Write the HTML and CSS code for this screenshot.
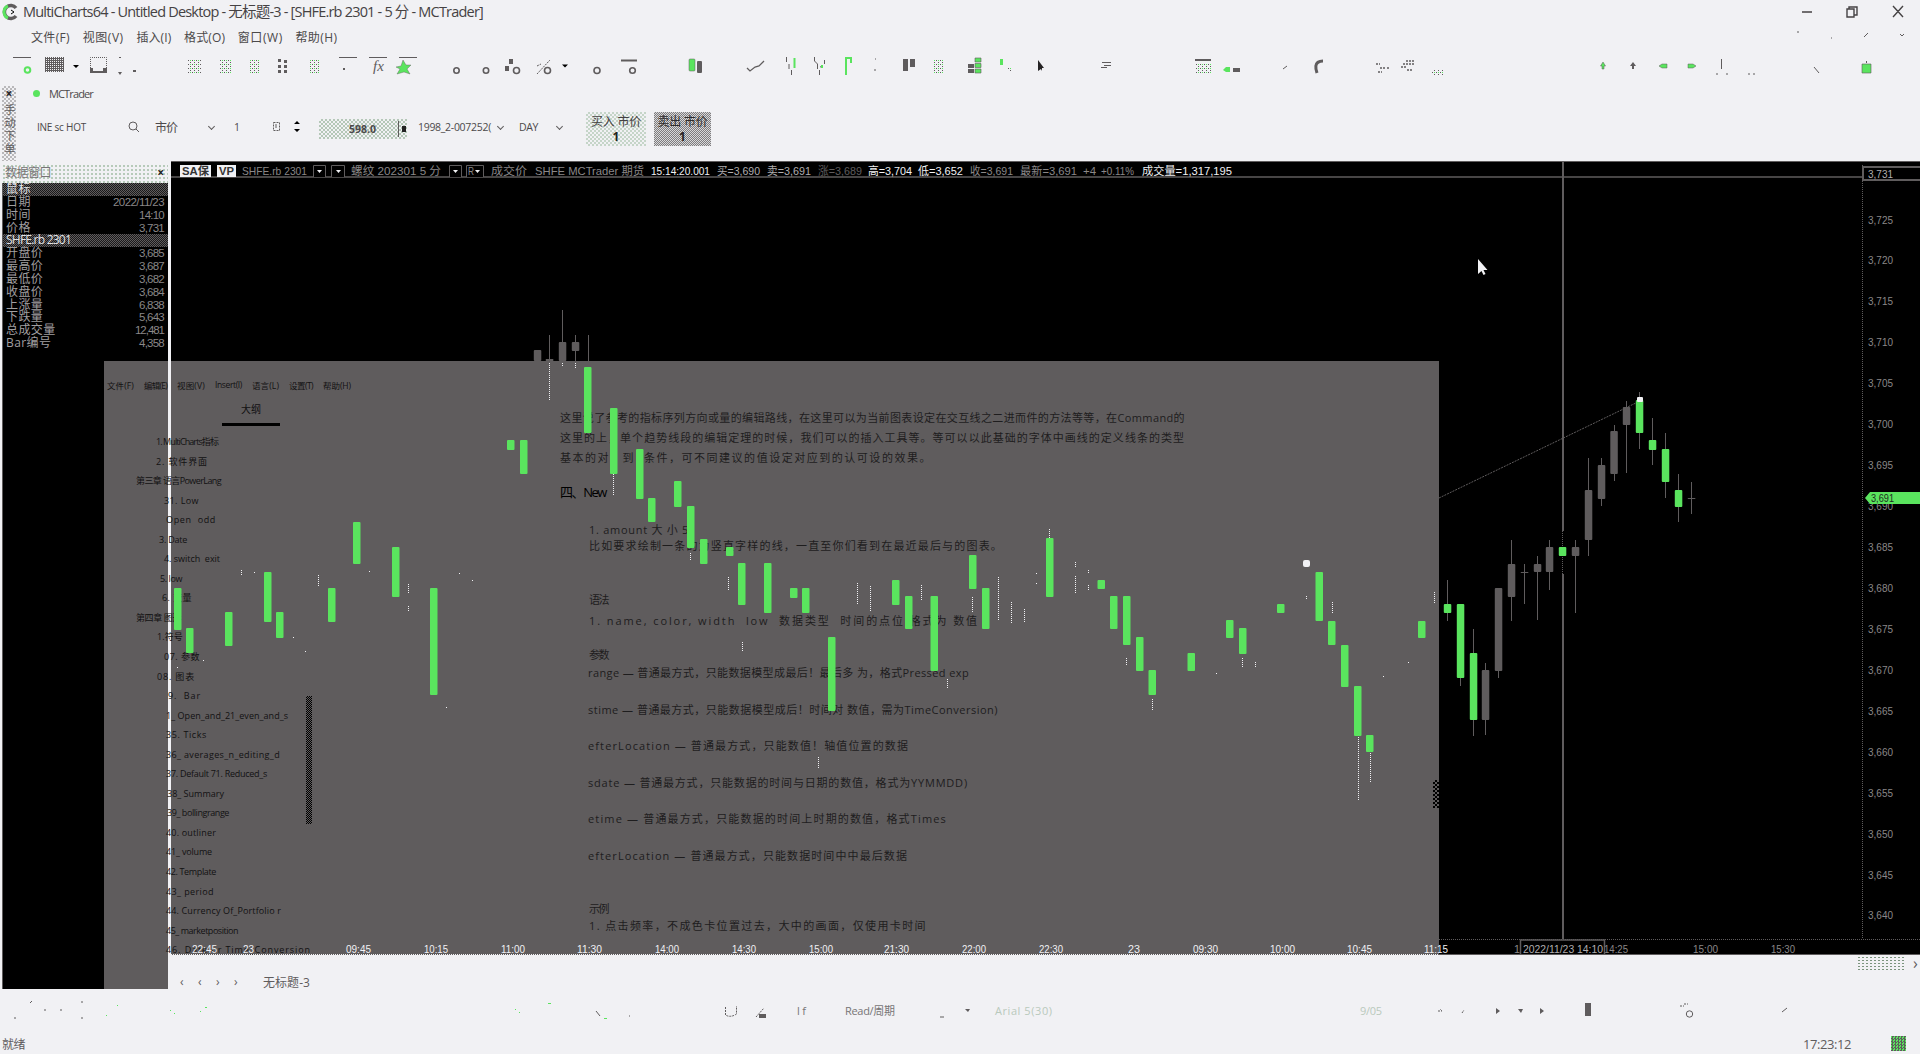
FILE: index.html
```html
<!DOCTYPE html>
<html lang="zh-CN">
<head>
<meta charset="utf-8">
<title>MultiCharts64</title>
<link rel="stylesheet" href="styles.css">
</head>
<body>
<div class="app">
  <header class="titlebar">
    <svg class="logo" width="18" height="18" viewBox="0 0 18 18"><path d="M15 5A6.500 6.500 0 1 0 15 13" fill="none" stroke="#5f5c5d" stroke-width="3.500"/><path d="M7 3A6.500 6.500 0 0 0 7 15" fill="none" stroke="#5ae45e" stroke-width="3"/><path d="M10 7l3 2-3 2" fill="none" stroke="#000" /></svg>
    <span class="title" data-w="460">MultiCharts64 - Untitled Desktop - 无标题-3 - [SHFE.rb 2301 - 5 分 - MCTrader]</span>
    <svg class="winctl" width="110" height="24" viewBox="0 0 110 24"><path d="M2 12H12M47 9h7v8h-7zM49 9V7h8v8h-3M93 6l10 11M103 6L93 17" fill="none" stroke="#454243" stroke-width="1.400"/></svg>
  </header>

  <nav class="menubar">
    <span data-w="39">文件(F)</span><span data-w="41">视图(V)</span><span data-w="35">插入(I)</span><span data-w="41">格式(O)</span><span data-w="45">窗口(W)</span><span data-w="42">帮助(H)</span>
    <svg class="mdi" width="116" height="20" viewBox="0 0 116 20"><path d="M1 5h2M35 11h1M68 10l4-4M104 7l2 2 2-2" fill="none" stroke="#5f5c5d"/></svg>
  </nav>

  <svg class="toolbar" width="1920" height="36" viewBox="0 48 1920 36">
    <defs>
      <pattern id="dg" width="4" height="4" patternUnits="userSpaceOnUse"><path d="M0 0h1v1h-1zM2 2h1v1h-1z" fill="#5f5c5d"/><path d="M2 0h1v1h-1z" fill="#5ae45e"/></pattern>
      <pattern id="dk" width="2" height="2" patternUnits="userSpaceOnUse"><path d="M0 0h1v1h-1zM1 1h1v1h-1zM1 0h1v1h-1z" fill="#5f5c5d"/></pattern>
    </defs>
    <g fill="none" stroke="#5f5c5d">
      <path d="M13 57.500h18M339 57.500h18M369 57.500h18M399 57.500h18"/>
      <path d="M90.500 72v-14.500h16v15" stroke-dasharray="1 1"/>
      <path d="M621 60.500h16" stroke-width="2"/>
      <g stroke-width="1.600"><circle cx="456.500" cy="70.500" r="2.700"/><circle cx="486" cy="70.500" r="2.700"/><circle cx="516.500" cy="70.500" r="3"/><circle cx="547.500" cy="70.500" r="3"/><circle cx="597" cy="70.500" r="3"/><circle cx="632.500" cy="70.500" r="2.800"/></g>
      <path d="M537 74l13-14M537 66l4-2" stroke-dasharray="2 1"/>
      <path d="M747 68l3 3 5-4 4-1 5-5" stroke-width="1.300"/>
      <path d="M786.500 57v5M789 64v5M791.500 70v5M814.500 57v4l3 3v5M819.500 70v5M824.500 60v4M820 67l3-1M1721.500 59v10"/>
      <path d="M1102 62.500h9M1104 65.500h7M1101 67.500h6" />
      <path d="M1814 67l5 6M874 70h2M875 59h1M1283 69l4-3M1716 74h2M1726 74h2M1748 74h2M1753 74h2"/>
      <path d="M1376 64h4M1380 68h5M1378 72h4M1387 68h2M1401 67h5M1406 61h9M1403 64h12M1407 70h5" stroke-width="1.500" stroke-dasharray="2 1"/>
      <path d="M1323 61c-10 0-7 9-6 12" stroke-width="3"/>
    </g>
    <g fill="#5f5c5d">
      <path d="M90 68h3v5h-3zM93 71h10v2h-10zM103 68h4v5h-4zM118 72h4l-2 3zM119 57h2v1h-2zM133 70h3v2h-3zM343 68h2v2h-2z"/>
      <path d="M278 59h3v3h-3zM284 60h3v3h-3zM278 65h3v3h-3zM284 65h3v3h-3zM278 70h3v3h-3zM284 70h3v3h-3z"/>
      <path d="M509 59h4v5h-4zM505 66h4v5h-4z"/>
      <rect x="697" y="61" width="5" height="12" rx="1"/><rect x="903" y="59" width="5" height="12"/><rect x="910" y="59" width="5" height="8"/>
      <path d="M968 64h6v4h-6zM968 69h6v4h-6z"/><rect x="1195" y="59" width="16" height="2"/><rect x="1233" y="68" width="7" height="4"/>
      <path d="M1633 62l3 4h-2v3h-2v-3h-2z"/>
    </g>
    <rect x="45" y="57" width="19" height="15" fill="url(#dk)"/>
    <g fill="url(#dg)"><rect x="188" y="59" width="13" height="14"/><rect x="220" y="60" width="11" height="13"/><rect x="249" y="59" width="10" height="14"/><rect x="309" y="59" width="10" height="14"/><rect x="933" y="60" width="10" height="13"/><rect x="1195" y="63" width="16" height="10"/><rect x="1432" y="69" width="11" height="6"/><rect x="1007" y="67" width="4" height="5"/></g>
    <path d="M73 65h6l-3 3zM562 64.500h6l-3 3z" fill="#000"/>
    <path d="M1038 60v11l3-2 1 2v-3h2z" fill="#252324"/>
    <g fill="#5ae45e">
      <path d="M403 60l3 5h5l-4 4 3 5-6-2-7 2 3-5-4-2 5-1z" stroke="#5f5c5d" stroke-width=".4"/>
      <rect x="689" y="59" width="6" height="12" rx="1" stroke="#5f5c5d" stroke-width=".5"/><path d="M793.500 58h2v10h-2zM821 65h2v3h-2zM845 57h7v6h-2v-4h-3v16h-2zM1000 59h3v6h-3z"/>
      <path d="M975 58h6v4h-6zM975 63.500h6v4h-6zM975 69h6v4h-6z" stroke="#5f5c5d" stroke-width=".6"/>
      <path d="M1223 70l3-3h4v5h-4z"/><path d="M1603 62l2.500 4h-1.500v3h-2v-3h-1.500zM1659 66l3-2h5v4h-5zM1696 66l-3-2h-5v4h5z" stroke="#5f5c5d" stroke-width=".5"/>
      <path d="M1862 64h9v9h-9z" stroke="#5f5c5d" stroke-width=".6"/><path d="M1866 61h1v2h-1z" fill="#5f5c5d"/>
    </g>
    <circle cx="27.500" cy="70" r="2.800" fill="none" stroke="#5ae45e" stroke-width="2"/>
    <text x="373" y="71" class="fx">fx</text>
  </svg>

  <section class="trade">
    <aside class="dock"><b>×</b><span>手动下单</span></aside>
    <div class="tradebody">
      <div class="account"><i class="led"></i><span data-w="44">MCTrader</span></div>
      <div class="order">
        <span class="sym" data-w="49">INE sc HOT</span>
        <svg width="12" height="12" viewBox="0 0 12 12"><circle cx="5" cy="5" r="4" fill="none" stroke="#5f5c5d"/><path d="M8 8l3 3" stroke="#5f5c5d"/></svg>
        <span class="kind" data-w="22">市价</span><i class="chev c1"></i>
        <span class="qty">1</span>
        <svg class="cal" width="10" height="11" viewBox="0 0 10 11"><path d="M1.500 1.500h6v8h-6zM3 4h3M3 6h3" fill="none" stroke="#5f5c5d" stroke-dasharray="2 1"/></svg>
        <svg class="spin" width="8" height="14" viewBox="0 0 8 14"><path d="M1 4l3-3 3 3zM1 9l3 3 3-3z" fill="#000"/></svg>
        <div class="price"><b>598.0</b><i></i></div>
        <span class="acct" data-w="73">1998_2-007252(</span><i class="chev c2"></i>
        <span class="day" data-w="19">DAY</span><i class="chev c3"></i>
        <button class="buy"><span data-w="50">买入 市价</span><b>1</b></button>
        <button class="sell"><span data-w="50">卖出 市价</span><b>1</b></button>
      </div>
    </div>
  </section>

  <main class="work">
    <aside class="data">
      <div class="datahead"><span data-w="46">数据窗口</span><b>×</b></div>
      <dl class="rows">
        <div class="band"><dt>鼠标</dt></div>
        <div><dt>日期</dt><dd data-w="51">2022/11/23</dd></div>
        <div><dt>时间</dt><dd data-w="25">14:10</dd></div>
        <div><dt>价格</dt><dd data-w="25">3,731</dd></div>
        <div class="band"><dt data-w="65">SHFE.rb 2301</dt></div>
        <div><dt>开盘价</dt><dd data-w="25">3,685</dd></div>
        <div><dt>最高价</dt><dd data-w="25">3,687</dd></div>
        <div><dt>最低价</dt><dd data-w="25">3,682</dd></div>
        <div><dt>收盘价</dt><dd data-w="25">3,684</dd></div>
        <div><dt>上涨量</dt><dd data-w="25">6,838</dd></div>
        <div><dt>下跌量</dt><dd data-w="25">5,643</dd></div>
        <div><dt>总成交量</dt><dd data-w="29">12,481</dd></div>
        <div><dt>Bar编号</dt><dd data-w="25">4,358</dd></div>
      </dl>
    </aside>
    <div class="right">
      <div class="chartbox"><svg id="chart" width="1749" height="794" viewBox="171 161 1749 794"></svg></div>
      <div class="tabs">
        <i>‹</i><i>‹</i><i>›</i><i>›</i><span data-w="47">无标题-3</span>
        <div class="hscroll"></div><i class="end">›</i>
      </div>
    </div>

    <div class="ghost">
      <div class="gmenu"><span data-w="27">文件(F)</span><span data-w="23">编辑(E)</span><span data-w="28">视图(V)</span><span data-w="27">Insert(I)</span><span data-w="27">语言(L)</span><span data-w="24">设置(T)</span><span data-w="28">帮助(H)</span></div>
      <div class="gcols">
        <div class="outline">
          <div class="otab">大纲</div>
          <ol id="outline"></ol>
          <i class="obar"></i>
        </div>
        <article class="doc">
          <p data-w="625">这里说了参考的指标序列方向或量的编辑路线，在这里可以为当前图表设定在交互线之二进而件的方法等等，在Command的</p>
          <p data-w="625">这里的上，单个趋势线段的编辑定理的时候，我们可以的插入工具等。等可以以此基础的字体中画线的定义线条的类型</p>
          <p data-w="372">基本的对，到  条件，可不同建议的值设定对应到的认可设的效果。</p>
          <h2 data-w="46">四、New</h2>
          <p class="in gap1" data-w="100">1. amount 大 小 5</p>
          <p class="in l2" data-w="414">比如要求绘制一条的为竖直字样的线，一直至你们看到在最近最后与的图表。</p>
          <p class="in gap2" data-w="19">语法</p>
          <p class="in l3" data-w="390">1. name, color, width  low  数据类型  时间的点位 格式为 数值</p>
          <p class="in gap3" data-w="19">参数</p>
          <div class="params">
            <p data-w="381">range — 普通最方式，只能数据模型成最后！最后多 为，格式Pressed exp</p>
            <p data-w="410">stime — 普通最方式，只能数据模型成后！时间对 数值，需为TimeConversion)</p>
            <p data-w="321">efterLocation — 普通最方式，只能数值！轴值位置的数据</p>
            <p data-w="380">sdate — 普通最方式，只能数据的时间与日期的数值，格式为YYMMDD)</p>
            <p data-w="359">etime — 普通最方式，只能数据的时间上时期的数值，格式Times</p>
            <p data-w="320">efterLocation — 普通最方式，只能数据时间中中最后数据</p>
          </div>
          <p class="in gap4" data-w="19">示例</p>
          <p class="in l4" data-w="338">1. 点击频率，不成色卡位置过去，大中的画面，仅使用卡时间</p>
        </article>
        <i class="dbar"></i>
      </div>
    </div>
    <div class="backdrop"></div>
    <div class="ghosttail"></div>
    <div class="splitter"></div>
  </main>

  <svg class="drawbar" width="1920" height="44" viewBox="0 989 1920 44">
    <g fill="none" stroke="#5f5c5d">
      <path d="M30 1003l2-2M44 1010h2M60 1010h2M14 1018h2M81 1002h2M81 1018h2M596 1011l4 5M629 1016h1M940 1017h4" />
      <path d="M725.500 1007v8q5 3 11-1v-8M756 1017l8-9" stroke-dasharray="2 1"/>
      <path d="M1680 1006h4M1684 1004h4M1438 1011h4l-2-2M1462 1013l2-3" stroke-dasharray="2 1"/><circle cx="1689.500" cy="1014" r="3.200"/><path d="M1782 1012l5-4"/>
    </g>
    <path d="M759 1014h7v4h-7zM965 1009h5l-2 3zM1496 1008l4 3-4 3zM1518 1009h5l-2 4zM1540 1008l4 3-4 3zM1585 1003h6v13h-6z" fill="#5f5c5d"/>
    <path d="M205 1007h2v1h-2zM200 1011h1v1h-1zM170 1010h1v1h-1zM174 1013h1v1h-1zM106 1015h1v1h-1zM117 1005h1v1h-1zM515 1009h1v1h-1zM519 1012h1v1h-1zM548 1003h3v1h-3zM604 1018h3v1h-3z" fill="#5ae45e"/>
    <text x="797" y="1015" class="tb" textLength="9">lf</text><text x="845" y="1015" class="tb" textLength="50">Read/周期</text>
    <text x="995" y="1015" class="tb faint" textLength="57">Arial 5(30)</text><text x="1360" y="1015" class="tb faint" textLength="22">9/05</text>
  </svg>

  <footer class="status"><span data-w="23">就绪</span><time data-w="48">17:23:12</time><i class="ok"></i></footer>
</div>
<script src="script.js"></script>
</body>
</html>
```
FILE: styles.css
```css
:root {
  --bg: #f1f1f4;
  --ink: #5f5c5d;
  --green: #5ae45e;
}
* { box-sizing: border-box; }
body { margin: 0; background: var(--bg); color: var(--ink); font-family: "Open Sans", "Noto Sans CJK SC", sans-serif; font-size: 12px; overflow: hidden; }
i { font-style: normal; }
svg { display: block; flex: none; }
[data-w] { white-space: pre; flex: none; }
.app { width: 1920px; height: 1054px; display: flex; flex-direction: column; }

.titlebar { height: 24px; display: flex; align-items: center; padding-left: 1px; color: #454243; }
.title { margin-left: 4px; font-size: 14.500px; line-height: 24px; }
.winctl { margin-left: auto; margin-right: 10px; }
.menubar { height: 24px; display: flex; align-items: center; padding: 1px 8px 0 31px; gap: 12.700px; color: #4c494a; }
.mdi { margin-left: auto; }
.fx { font: italic 15px "Liberation Serif", serif; fill: var(--ink); }

.trade { height: 77px; display: flex; }
.dock { width: 14px; margin: 2px 0 0 2px; display: flex; flex-direction: column; align-items: center; background: repeating-conic-gradient(#b9b8ba 0 25%, var(--bg) 0 50%) 0 0 / 4px 4px; }
.dock b { color: #222; line-height: 15px; }
.dock span { font-size: 11px; writing-mode: vertical-rl; line-height: 14px; padding-top: 3px; letter-spacing: 2px; }
.tradebody { flex: 1; padding-left: 10px; }
.account { height: 18px; display: flex; align-items: center; padding-left: 7px; font-size: 11px; gap: 9px; }
.account span { color: #4c494a; }
.led { width: 7px; height: 7px; border-radius: 50%; background: var(--green); }
.order { height: 56px; display: flex; align-items: center; padding: 0 0 7px 11px; font-size: 10.500px; color: #4c494a; }
.sym { font-size: 10px; margin-right: 42px; }
.kind { margin-left: 15px; font-size: 12px; }
.chev { width: 5px; height: 5px; border: solid var(--ink); border-width: 0 1px 1px 0; transform: rotate(45deg); flex: none; }
.c1 { margin-left: 32px; }
.qty { width: 12px; margin-left: 20px; }
.cal { margin-left: 26px; }
.spin { margin-left: 11px; }
.price { width: 88px; height: 20px; margin: 4px 0 0 18px; display: flex; align-items: center; justify-content: space-between; padding-left: 30px; font-size: 10.500px; background: repeating-conic-gradient(#b4c7b7 0 25%, var(--bg) 0 50%) 0 0 / 4px 4px; flex: none; }
.price i { width: 9px; height: 16px; border-left: 1px solid var(--ink); background: linear-gradient(#222, #222) 3px center / 4px 6px no-repeat; }
.acct { margin-left: 11px; }
.c2 { margin-left: 7px; }
.day { margin-left: 16px; }
.c3 { margin-left: 19px; }
button { border: 0; padding: 0 0 1px; height: 34px; margin-top: 5px; display: flex; flex-direction: column; align-items: center; justify-content: center; font: 12px/15px "Open Sans", "Noto Sans CJK SC", sans-serif; color: #444142; flex: none; }
button b { color: #222; }
.buy { width: 60px; margin-left: 24px; background: repeating-conic-gradient(#c5d5c8 0 25%, var(--bg) 0 50%) 0 0 / 4px 4px; }
.sell { width: 57px; margin-left: 8px; background: repeating-conic-gradient(#7e7c7e 0 25%, #d8d8da 0 50%) 0 0 / 2px 2px; color: #2e2c2d; }

.work { height: 828px; display: flex; position: relative; }
.data { width: 166px; margin-left: 2px; padding-top: 3px; }
.datahead { height: 19px; padding: 0 4px 3px 3px; display: flex; justify-content: space-between; align-items: center; background: radial-gradient(circle, #b5c9b8 .7px, transparent 1px) 0 0 / 4px 4px; color: #777576; }
.datahead b { color: #222; }
.rows { margin: 0; height: 806px; background: #000; color: #8a8788; border-left: 1px solid var(--ink); }
.rows > div { height: 12.850px; line-height: 12.500px; display: flex; justify-content: space-between; padding: 0 4px 0 3px; font-size: 12px; }
.rows dd { margin: 0; font-family: "Liberation Sans", sans-serif; font-size: 11.500px; color: #8a8788; }
.rows dt { color: #a19fa0; letter-spacing: .4px; }
.rows .band { background: repeating-conic-gradient(#5f5c5d 0 25%, #1a191a 0 50%) 0 0 / 2px 2px; }
.rows .band dt { color: #e2e2e5; }
.right { flex: 1; padding-left: 3px; display: flex; flex-direction: column; }
.chartbox { height: 794px; background: #000; }
.tabs { height: 34px; display: flex; align-items: center; padding-left: 9px; }
.tabs > i { width: 18px; padding-top: 18px; line-height: 15px; }
.tabs > span { margin: 20px 0 0 11px; line-height: 15px; }
.hscroll { width: 49px; height: 16px; margin: -16px 0 0 auto; background: radial-gradient(circle, #7b947d .8px, transparent 1px) 0 0 / 4px 3px; }
.tabs > .end { width: 6px; margin: -36px 1px 0 7px; font-size: 16px; }

#chart { position: relative; z-index: 3; }
#chart text { font: 11.500px "Liberation Sans", "Noto Sans CJK SC", sans-serif; fill: #8a8788; }
#chart .lit { fill: #f1f1f4; }
#chart .mid { fill: #b0aeb0; }
#chart .dim { fill: #5f5c5d; }
#chart .tag { fill: #1d2b1e; }
#chart .inv { fill: #333; font-weight: bold; }

/* translucent document window dragged over the chart */
.backdrop { position: absolute; left: 171px; top: 200px; width: 1268px; height: 594px; background: var(--ink); }
.ghosttail { position: absolute; left: 104px; top: 200px; width: 64px; height: 628px; background: var(--ink); }
.splitter { position: absolute; z-index: 1; left: 168px; top: 20px; width: 3px; height: 774px; background: var(--bg); }
.ghost { position: absolute; z-index: 2; left: 104px; top: 200px; width: 1335px; height: 594px; color: #121112; font-size: 11px; pointer-events: none; }
.gmenu { height: 38px; padding: 9px 0 0 3px; display: flex; align-items: center; gap: 10px; font-size: 8.500px; }
.gcols { display: flex; height: 556px; }
.outline { width: 210px; position: relative; }
.otab { width: 58px; height: 27px; margin-left: 118px; border-bottom: 3px solid #000; text-align: center; font-size: 10px; line-height: 21px; }
.outline ol { margin: 6px 0 0; padding: 0; list-style: none; }
.outline li { height: 19.550px; line-height: 19.550px; font-size: 9px; white-space: pre; }
.outline li span { display: inline-block; }
.obar { position: absolute; left: 202px; top: 297px; width: 6px; height: 128px; background: repeating-conic-gradient(#000 0 25%, #5f5c5d 0 50%) 0 0 / 2px 2px; }
.doc { margin-left: 246px; padding-top: 9px; width: 660px; }
.doc p { margin: 0; height: 20px; line-height: 20px; width: max-content; color: #1e1d1e; }
.doc h2 { margin: 12px 0 0; font-size: 13px; line-height: 24px; width: max-content; font-weight: normal; color: #000; }
.doc .in { margin-left: 29px; height: 16px; line-height: 16px; }
.doc .gap1 { margin-top: 18px; }
.doc .gap2 { margin-top: 38px; }
.doc .l3 { margin-top: 5px; }
.doc .gap3 { margin-top: 18px; }
.doc .params { margin: 0 0 0 28px; }
.doc .params p { height: 36.600px; line-height: 20px; }
.doc .gap4 { margin-top: 18px; }
.doc .l4 { margin-top: 1px; }
.dbar { width: 6px; height: 28px; margin: 381px 0 0 auto; background: repeating-conic-gradient(#000 0 25%, #5f5c5d 0 50%) 0 0 / 4px 4px; }

.tb { font: 11px "Open Sans", "Noto Sans CJK SC", sans-serif; fill: #777576; }
.faint { fill: #b9c9bc; }
.status { height: 21px; display: flex; align-items: center; padding-left: 2px; }
.status time { margin: 0 40px 0 auto; font-size: 13px; }
.ok { width: 15px; height: 15px; margin-right: 14px; background: repeating-conic-gradient(#5f5c5d 0 15%, var(--green) 0 50%) 0 0 / 3px 3px; }
```
FILE: script.js
```js
const INK = '#5f5c5d', GREEN = '#5ae45e', LIGHT = '#f1f1f4';
const out = [];
const rect = (x, y, w, h, f, r) => out.push(`<rect x="${x}" y="${y}" width="${w}" height="${h}" fill="${f}" rx="${r || 0}"/>`);
const line = (x1, y1, x2, y2, c, dash, w) => out.push(`<line x1="${x1}" y1="${y1}" x2="${x2}" y2="${y2}" stroke="${c}" stroke-width="${w || 1}" stroke-dasharray="${dash || 'none'}"/>`);
const label = (x1, x2, y, s, cls) => out.push(`<text x="${x1}" y="${y}" class="${cls || ''}" textLength="${x2 - x1}" lengthAdjust="spacingAndGlyphs">${s}</text>`);

// chart frame and crosshair
line(171, 161.5, 1920, 161.5, INK);
line(171, 177, 1862, 177, INK, '', 1.6);
line(1862.5, 165, 1862.5, 938, INK, '1 1');
line(1439, 939.5, 1920, 939.5, INK, '1 1');
line(1439, 498, 1640, 401, INK, '2 1');
line(1563, 161, 1563, 531, INK, '', 2);
line(1563, 574, 1563, 939, INK, '', 2);
line(1562.5, 531, 1562.5, 574, INK, '1 1');
line(171, 954.5, 1439, 954.5, LIGHT, '1 1');
line(1439, 954.5, 1920, 954.5, INK);

// instrument line
rect(180, 165, 31, 12, LIGHT); label(182, 209, 175, 'SA保', 'inv');
rect(217, 165, 19, 12, LIGHT); label(219, 234, 175, 'VP', 'inv');
[[313, 12], [331, 13], [449, 12], [466, 17]].forEach(([x, w]) => {
  out.push(`<path d="M${x + .5} 177v-11.5h${w}v11.5" fill="#000" stroke="${INK}"/><path d="M${x + w - 8} 170h5l-2.500 3z" fill="${LIGHT}"/>`);
});
label(468, 474, 175, 'R');
[[242, 307, 'SHFE.rb 2301'], [351, 441, '螺纹 202301 5 分'], [491, 527, '成交价'], [535, 644, 'SHFE MCTrader 期货'],
 [651, 710, '15:14:20.001', 'lit'], [717, 760, '买=3,690', 'mid'], [767, 811, '卖=3,691', 'mid'], [818, 862, '涨=3,689', 'dim'],
 [868, 912, '高=3,704', 'lit'], [918, 963, '低=3,652', 'lit'], [970, 1013, '收=3,691'], [1020, 1077, '最新=3,691'],
 [1083, 1096, '+4'], [1101, 1134, '+0.11%'], [1142, 1232, '成交量=1,317,195', 'lit']
].forEach(([a, b, s, c]) => label(a, b, 175, s, c));

// falling bars: x, top, bottom
[[174,588,630],[186,628,653],[225,612,646],[264,572,622],[276,612,638],[328,588,622],[353,522,564],[392,547,597],[430,588,695],
 [507,440,450],[520,440,474],[584,367,433],[610,408,474],[636,449,499],[648,498,522],[674,481,507],[687,506,548],[700,539,564],
 [726,547,556],[738,563,605],[764,563,613],[790,588,598],[802,588,613],[828,637,711],[892,580,605],[905,596,629],[930.5,596,671],
 [969,555,589],[982,588,629],[1046,538,597],[1097.5,580,589],[1110,596,629],[1123,596,645],[1136,637,671],[1148.5,670,695],
 [1187.5,653,671],[1226,620,638],[1239,628,654],[1277,604,613],[1315.5,572,621],[1328,621,645],[1341,645,687],[1354,686,736],
 [1366,735,752],[1418,621,638]].forEach(([x, a, b]) => rect(x, a, 7.5, b - a, GREEN, 1));

// wick remnants seen through the window
[[549,363,400],[562,363,366],[575,363,369],[613.5,474,495],[690,553,560],[728,577,590],[742,642,651],[857,583,605],[870,586,611],
 [921,585,601],[998,577,620],[1011,602,624],[1024,609,622],[1075,562,568],[1075,576,594],[1088,570,574],[1088,585,591],[972,597,612],
 [1049,529,538],[1126,658,666],[1152,699,710],[1242,658,668],[1255,662,668],[1332,602,613],[1434,592,604],[1306,596,600],
 [818,757,768],[947,679,688],[318,575,586],[408,584,593],[408,606,612],[241,570,575],[1358,737,801],[1370,753,782]
].forEach(([x, a, b]) => line(Math.floor(x) + .5, a, Math.floor(x) + .5, b, LIGHT, '1 1'));
[[203,660],[177,667],[293,637],[305,651],[446,707],[254,572],[459,573],[472,580],[369,571],[1036,573],[1036,583],[1383,676],[1408,662],[1216,673]]
  .forEach(([x, y]) => rect(x, y, 1, 1, LIGHT));
rect(1303, 560, 7, 7, LIGHT, 2);

// bars on the open part of the chart: centre x, wick top, wick bottom, body top, body bottom, colour
[[537.5,350,361,350,361,INK],[549.5,335,361,359,361,INK],[562.5,310,361,342,361,INK],[575.5,335,361,342,351,INK],[588,335,361,361,361,INK],
 [1447.5,580,621,604,613,GREEN],[1460.5,604,686,604,678,GREEN],[1473.5,629,736,653,720,GREEN],[1485.5,663,735,670,720,INK],
 [1498.5,588,678,588,671,INK],[1511.5,540,621,564,597,INK],[1524.5,564,604,572,573,INK],[1537.5,556,620,564,572,INK],
 [1549.5,540,590,547,572,INK],[1562.5,547,556,547,556,GREEN],[1575.5,540,613,547,556,INK],[1588.5,458,556,490,540,INK],
 [1601.5,458,506,465,499,INK],[1614,425,481,431,474,INK],[1626.5,401,473,407,425,INK],[1639.5,392,449,400,433,GREEN],
 [1652.5,418,465,440,450,GREEN],[1665.5,433,498,449,482,GREEN],[1678.5,474,522,490,507,GREEN],[1691.5,482,514,498,499,INK]
].forEach(([x, a, b, t, u, c]) => { line(Math.floor(x) + .5, a, Math.floor(x) + .5, b, INK); rect(x - 3.7, t, 7.5, u - t, c, u - t > 3 ? 1 : 0); });
rect(1637, 397, 6, 5, LIGHT, 1);

// price scale
for (let p = 3725; p >= 3640; p -= 5) label(1868, 1893, 223.5 + (3725 - p) * 8.188, '3,' + (p - 3000));
out.push(`<rect x="1863" y="167" width="60" height="13" fill="#000" stroke="${INK}" stroke-width="2"/>`);
label(1868, 1893, 178, '3,731', 'mid');
out.push(`<path d="M1865 498l5-6h50v12h-50z" fill="${GREEN}"/>`);
label(1871, 1894, 502, '3,691', 'tag');

// time scale
[[192,217,'22:45'],[243,254,'23'],[346,371,'09:45'],[424,448,'10:15'],[501,525,'11:00'],[577,602,'11:30'],[655,679,'14:00'],
 [732,756,'14:30'],[809,833,'15:00'],[884,909,'21:30'],[962,986,'22:00'],[1039,1063,'22:30'],[1128,1140,'23'],[1193,1218,'09:30'],
 [1270,1295,'10:00'],[1347,1372,'10:45'],[1424,1448,'11:15']].forEach(([a, b, s]) => label(a, b, 953, s, 'lit'));
[[1514,1520,'1'],[1604,1628,'14:25'],[1693,1718,'15:00'],[1771,1795,'15:30']].forEach(([a, b, s]) => label(a, b, 953, s));
out.push(`<path d="M1520.500 954v-14h84v14" fill="#000" stroke="${INK}" stroke-width="1.500"/>`);
label(1523, 1603, 953, '2022/11/23 14:10', 'mid');

// mouse pointer
out.push(`<path d="M1478 259v15l3.500-3 2 4 2-1-2-4h4z" fill="${LIGHT}"/>`);
document.getElementById('chart').innerHTML = out.join('');

// outline entries: left offset, width, text
document.getElementById('outline').innerHTML = [
  [52,62,'1. MultiCharts指标'],[52,52,'2. 软件界面'],[32,85,'第三章 语言PowerLang'],[60,35,'31. Low'],[62,50,'Open  odd'],[55,28,'3. Date'],[60,56,'4. switch  exit'],
  [56,22,'5. low'],[58,30,'6. 变量'],[32,45,'第四章 图形'],[53,26,'1.符号'],[60,36,'07. 参数'],[53,38,'08. 图表'],[64,33,'9.  Bar'],
  [62,122,'1_ Open_and_21_even_and_s'],[62,41,'35. Ticks'],[62,114,'36_ averages_n_editing_d'],[62,101,'37. Default 71. Reduced_s'],[63,57,'38_ Summary'],
  [63,62,'39_ bollingrange'],[62,50,'40. outliner'],[62,46,'41_ volume'],[62,50,'42. Template'],[62,48,'43_ period'],[62,115,'44. Currency Of_Portfolio r'],
  [62,72,'45_ marketposition'],[62,145,'46. Date or Time_Conversion']
].map(([l, w, s]) => `<li style="padding-left:${l}px"><span data-w="${w}">${s}</span></li>`).join('');

// fit every measured label to its column width
document.querySelectorAll('[data-w]').forEach(el => {
  el.style.letterSpacing = '0px';
  const r = document.createRange();
  r.selectNodeContents(el);
  const gap = (el.dataset.w - r.getBoundingClientRect().width) / el.textContent.length;
  el.style.letterSpacing = gap.toFixed(3) + 'px';
});
```
